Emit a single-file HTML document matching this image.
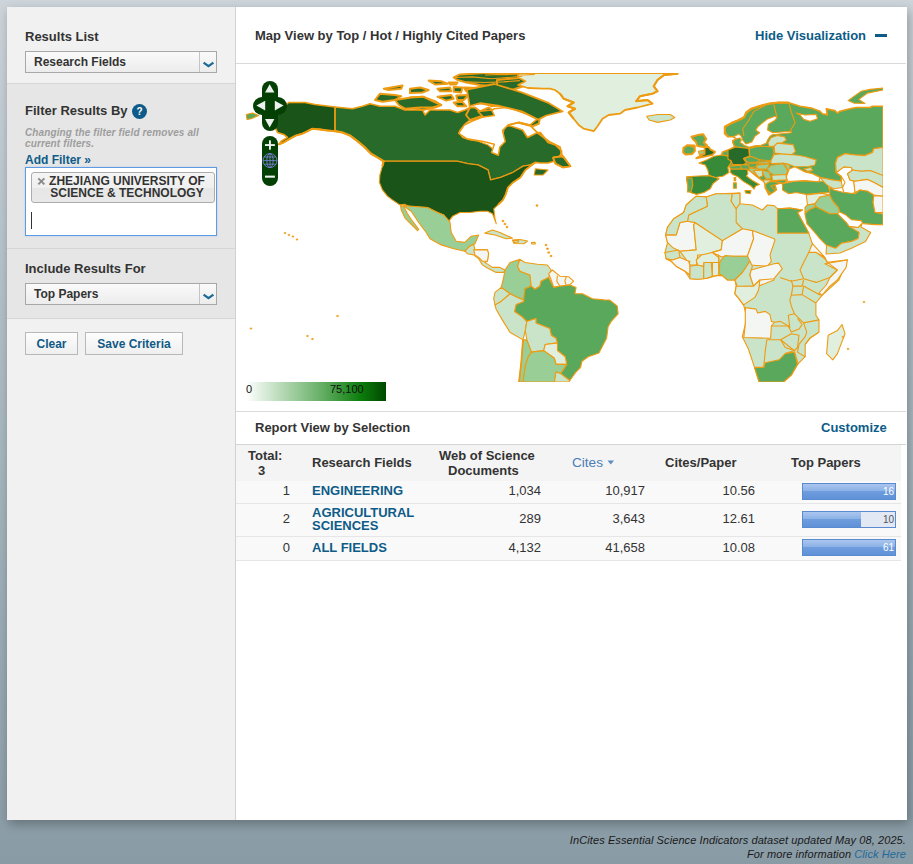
<!DOCTYPE html>
<html><head><meta charset="utf-8">
<style>
*{box-sizing:border-box;margin:0;padding:0}
html,body{width:913px;height:864px;overflow:hidden}
body{font-family:"Liberation Sans",sans-serif;background:linear-gradient(#cdd4da 0px,#b2c0c8 300px,#a0b0b8 550px,#899ba5 864px);position:relative;color:#333}
.a{position:absolute;white-space:nowrap}
.h{font-size:13px;font-weight:bold;color:#333;line-height:15px}
.sel{position:absolute;border:1px solid #a8a8a8;background:linear-gradient(#fafafa,#ececec)}
.sel span{position:absolute;left:8px;top:3px;font-size:12px;font-weight:bold;color:#333;line-height:14px}
.sel i{position:absolute;right:0;top:0;width:17px;height:20px;border-left:1px solid #c4c4c4}
.btn{position:absolute;border:1px solid #b8b8b8;background:linear-gradient(#fdfdfd,#efefef);font-size:12px;font-weight:bold;color:#0f5a85;text-align:center;line-height:22px}
.t13{font-size:13px;line-height:15px}
.b{font-weight:bold}
.lk{color:#0d5c88}
.num{font-size:13px;line-height:15px;color:#333;text-align:right}
.bar{position:absolute;left:802px;width:94px;height:17px;border:1px solid #5a8bd1;background:#e2e8f4}
.bar i{position:absolute;left:0;top:0;bottom:0;background:linear-gradient(#aac6ee 0%,#8db2e6 45%,#6e9ddd 50%,#5f92d8 100%)}
.bar span{position:absolute;right:1px;top:2px;font-size:10px;line-height:12px;color:#fff}
</style></head><body>
<div class="a" style="left:7px;top:7px;width:900px;height:813px;background:#fff;box-shadow:2px 4px 10px rgba(0,0,0,.28)"></div>
<!-- sidebar -->
<div class="a" style="left:7px;top:7px;width:228px;height:76px;background:#f1f1f1"></div>
<div class="a" style="left:7px;top:83px;width:228px;height:1px;background:#d6d6d6"></div>
<div class="a" style="left:7px;top:84px;width:228px;height:164px;background:#e6e6e6"></div>
<div class="a" style="left:7px;top:248px;width:228px;height:1px;background:#d6d6d6"></div>
<div class="a" style="left:7px;top:249px;width:228px;height:69px;background:#e6e6e6"></div>
<div class="a" style="left:7px;top:318px;width:228px;height:1px;background:#d6d6d6"></div>
<div class="a" style="left:7px;top:319px;width:228px;height:501px;background:#f1f1f1"></div>
<div class="a" style="left:235px;top:7px;width:1px;height:813px;background:#d2d2d2"></div>

<div class="a h" style="left:25px;top:29px">Results List</div>
<div class="sel" style="left:25px;top:51px;width:192px;height:22px"><span>Research Fields</span><i><svg width="17" height="20" style="position:absolute;left:0;top:0"><path d="M3.6 10.6 L8.5 14.2 L13.4 10.6" stroke="#1d6a93" stroke-width="2.2" fill="none"/></svg></i></div>

<div class="a h" style="left:25px;top:103px">Filter Results By</div>
<div class="a" style="left:132px;top:104px;width:15px;height:15px;border-radius:50%;background:#0f5a88;color:#fff;font-size:10px;font-weight:bold;text-align:center;line-height:15px">?</div>
<div class="a" style="left:25px;top:127px;font-size:10px;letter-spacing:0.12px;font-style:italic;font-weight:bold;color:#9d9d9d;line-height:11px">Changing the filter field removes all<br>current filters.</div>
<div class="a b lk" style="left:25px;top:153px;font-size:12px;line-height:14px">Add Filter &raquo;</div>
<div class="a" style="left:25px;top:167px;width:192px;height:69px;border:1px solid #5f9be4;background:#fff;box-shadow:0 0 2px rgba(95,155,228,.35)"></div>
<div class="a" style="left:31px;top:172px;width:184px;height:31px;border:1px solid #acacac;border-radius:3px;background:linear-gradient(#f5f5f5 0%,#efefef 50%,#e6e6e6 51%,#e9e9e9 100%)"></div>
<svg class="a" style="left:37px;top:177px" width="9" height="9"><path d="M1.3 1.3L7.4 7.4M7.4 1.3L1.3 7.4" stroke="#8a8a8a" stroke-width="1.9"/></svg>
<div class="a b" style="left:47px;top:175px;width:160px;font-size:12px;line-height:12px;text-align:center;color:#333">ZHEJIANG UNIVERSITY OF<br>SCIENCE &amp; TECHNOLOGY</div>
<div class="a" style="left:31px;top:212px;width:1px;height:17px;background:#333"></div>

<div class="a h" style="left:25px;top:261px">Include Results For</div>
<div class="sel" style="left:25px;top:283px;width:192px;height:22px"><span>Top Papers</span><i><svg width="17" height="20" style="position:absolute;left:0;top:0"><path d="M3.6 10.6 L8.5 14.2 L13.4 10.6" stroke="#1d6a93" stroke-width="2.2" fill="none"/></svg></i></div>

<div class="btn" style="left:25px;top:332px;width:53px;height:23px">Clear</div>
<div class="btn" style="left:85px;top:332px;width:98px;height:23px">Save Criteria</div>

<!-- main header -->
<div class="a h" style="left:255px;top:28px">Map View by Top / Hot / Highly Cited Papers</div>
<div class="a h lk" style="left:755px;top:28px">Hide Visualization</div>
<div class="a" style="left:875px;top:33.6px;width:12px;height:3.8px;background:#0d5c88"></div>
<div class="a" style="left:236px;top:63px;width:670px;height:1px;background:#d9d9d9"></div>

<svg class="a" style="left:0;top:0" width="913" height="864">
<defs><clipPath id="mc"><rect x="245" y="73" width="638" height="309"/></clipPath>
<linearGradient id="lg" x1="0" x2="1" y1="0" y2="0"><stop offset="0" stop-color="#ffffff"/><stop offset="0.55" stop-color="#62ad62"/><stop offset="0.82" stop-color="#0b7d0b"/><stop offset="1" stop-color="#004800"/></linearGradient></defs>
<g clip-path="url(#mc)" stroke="#ee9b12" stroke-width="1.1" stroke-linejoin="round">
<polygon fill="#276a29" stroke-width="1.6" points="334.9,107.0 352.4,108.7 362.4,106.2 370.0,103.8 380.0,106.3 395.0,106.3 405.0,110.0 422.5,110.0 425.0,115.0 430.0,110.0 450.0,110.0 457.5,112.5 465.0,110.0 470.0,107.5 476.3,112.5 484.0,112.5 495.0,115.0 502.5,125.0 511.3,126.3 522.5,130.0 527.5,137.5 537.5,132.5 540.4,132.5 548.0,142.5 555.4,145.0 561.7,151.2 560.4,155.0 554.2,161.2 548.0,163.0 540.0,163.0 535.4,162.4 530.4,165.0 523.0,166.2 513.0,172.4 500.5,177.4 490.5,180.0 488.0,170.0 478.0,165.0 468.0,163.7 457.3,161.2 383.6,161.2 377.4,157.4 371.1,153.7 364.9,147.4 357.4,141.2 349.9,135.4 342.4,132.4 334.9,131.2"/>
<polygon fill="#ffffff" points="458.8,132.5 460.0,130.0 465.0,123.8 470.0,120.0 478.8,120.0 484.0,117.5 490.0,120.0 495.0,122.5 502.5,127.5 504.0,130.0 502.0,137.0 500.0,145.0 498.0,155.0 494.0,150.0 488.0,145.0 478.0,141.3 470.0,140.0 462.5,137.5"/>
<polygon fill="#276a29" points="552.9,157.4 562.9,156.2 570.4,166.2 562.9,167.4 555.4,163.7"/>
<polygon fill="#276a29" points="535.4,168.7 548.0,170.0 543.0,175.0 534.2,175.0"/>
<polygon fill="#276a29" stroke-width="2" points="453.7,77.5 459.9,74.4 484.9,73.1 524.0,73.1 544.8,73.1 534.8,75.0 524.0,78.7 512.4,80.0 507.4,85.0 491.1,86.2 479.9,85.0 466.2,82.5 457.4,80.0"/>
<polygon fill="#276a29" stroke-width="2" points="428.7,80.6 441.2,81.2 447.5,83.7 435.0,84.4"/>
<polygon fill="#276a29" stroke-width="2" points="448.7,82.5 457.4,82.5 456.2,84.4 450.0,84.4"/>
<polygon fill="#276a29" stroke-width="2" points="410.0,88.7 420.0,87.5 428.7,90.0 422.5,92.5 410.0,93.1"/>
<polygon fill="#276a29" stroke-width="2" points="437.5,88.7 450.0,87.5 451.2,91.2 440.0,91.2"/>
<polygon fill="#276a29" stroke-width="2" points="453.7,86.9 462.4,87.5 461.2,92.5 453.7,91.8"/>
<polygon fill="#276a29" stroke-width="2" points="463.7,87.5 479.9,88.1 497.4,90.0 498.6,92.5 484.9,93.1 466.2,91.2"/>
<polygon fill="#276a29" stroke-width="2" points="410.0,97.5 422.5,96.8 435.0,101.2 441.2,105.0 435.0,107.5 422.5,110.0 410.0,107.5"/>
<polygon fill="#276a29" stroke-width="2" points="437.5,96.8 451.2,95.0 453.7,98.7 446.2,100.6"/>
<polygon fill="#276a29" stroke-width="2" points="456.2,95.6 468.7,95.0 463.7,100.0 457.4,100.0"/>
<polygon fill="#276a29" stroke-width="2" points="453.7,102.5 462.4,101.8 466.2,106.2 457.4,106.2"/>
<polygon fill="#276a29" stroke-width="2" points="471.2,98.7 479.9,95.6 491.1,96.2 497.4,98.7 516.1,103.7 524.0,106.2 524.0,119.9 517.4,119.9 513.6,111.2 502.4,105.0 491.1,106.2 487.4,102.5 477.4,103.7 472.4,102.5"/>
<polygon fill="#276a29" stroke-width="2" points="375.0,100.0 380.0,93.7 395.0,95.0 401.3,96.2 395.0,100.0 382.5,101.8"/>
<polygon fill="#276a29" stroke-width="2" points="395.0,100.0 411.2,97.5 423.7,96.8 432.5,101.2 441.2,105.0 432.5,107.5 420.0,107.5 405.0,108.7 398.8,105.0"/>
<polygon fill="#276a29" stroke-width="2" points="383.8,88.7 402.5,85.6 401.3,88.7 388.8,90.0"/>
<polygon fill="#276a29" stroke-width="2" points="471.3,100.0 477.5,95.6 492.5,95.6 502.5,98.8 513.8,101.3 526.3,105.0 536.3,110.0 547.5,114.4 540.0,117.5 538.8,123.8 532.5,126.3 522.5,123.8 513.8,121.3 505.0,118.8 513.8,113.8 507.5,108.8 501.3,105.0 495.0,103.8 488.8,105.0 477.5,102.5"/>
<polygon fill="#276a29" stroke-width="2" points="470.0,107.5 475.0,107.5 480.0,111.3 488.8,107.5 493.8,111.3 485.0,115.0 477.5,117.5 470.0,120.0 466.0,115.0"/>
<polygon fill="#276a29" stroke-width="2" points="481.3,117.5 490.0,120.0 495.0,122.5 482.5,122.5"/>
<polygon fill="#276a29" stroke-width="2" points="497.0,80.0 520.0,78.0 545.0,73.1 530.0,84.0 512.0,90.0 497.0,92.0"/>
<polygon fill="#1b5419" stroke-width="1.6" points="280.0,110.0 288.7,102.5 304.9,102.5 314.9,104.5 334.9,107.0 334.9,131.2 327.4,130.4 319.9,129.4 312.4,128.7 306.2,131.9 302.4,133.7 296.2,135.4 290.0,138.7 283.7,142.4 278.7,144.4 281.2,141.2 287.5,137.4 283.7,134.4 277.5,132.4 275.0,127.4 275.0,118.7"/>
<polygon fill="#5aa85b" points="246.2,114.5 252.5,113.0 258.7,115.5 251.2,118.7 247.0,119.5"/>
<polygon fill="#1b5419" points="383.6,161.2 457.3,161.2 468.0,163.7 478.0,165.0 488.0,170.0 490.5,180.0 500.5,177.4 513.0,172.4 523.0,166.2 530.4,165.0 535.4,162.4 525.4,170.0 520.4,177.4 513.0,182.4 508.0,187.4 505.5,194.9 503.0,199.9 498.0,204.9 493.8,208.8 495.0,218.8 496.3,223.8 492.5,213.8 487.5,211.3 480.0,211.3 470.0,212.5 460.0,212.5 452.5,216.3 448.8,221.3 443.8,215.0 437.5,212.5 427.5,207.5 410.0,206.9 405.0,204.4 399.8,204.9 392.4,199.9 387.4,196.1 382.4,189.9 379.4,182.4 379.9,174.9 382.4,166.2"/>
<polygon fill="#99cf96" points="403.7,205.6 427.5,207.5 437.5,212.5 443.7,215.0 449.9,221.8 451.2,232.5 456.2,241.2 464.9,242.4 471.2,236.2 478.7,235.0 474.9,243.7 469.9,246.2 464.9,251.2 453.7,248.7 441.2,244.9 430.0,238.7 426.2,232.5 418.7,222.5 411.2,211.2 407.5,208.7"/>
<polygon fill="#99cf96" points="400.6,205.6 403.7,206.2 407.5,213.7 412.5,221.2 418.7,229.3 417.5,230.6 411.9,225.0 405.0,218.1 401.2,210.0"/>
<polygon fill="#cae4c9" points="464.9,251.2 469.9,246.2 473.7,244.3 474.9,249.9 487.4,249.9 488.6,253.7 487.4,261.2 484.9,262.4 492.4,267.4 499.9,267.4 504.9,269.9 503.6,272.4 496.1,272.4 487.4,268.0 482.4,264.9 478.7,258.7 473.7,254.9 467.4,253.7"/>
<polygon fill="#f3f6f3" points="473.7,249.9 487.4,249.9 488.6,253.7 487.4,261.2 482.4,261.2 478.7,257.4 474.9,254.9"/>
<polygon fill="#cae4c9" points="484.9,233.1 492.4,230.0 499.9,232.5 512.4,238.1 506.1,238.7 494.9,235.0"/>
<polygon fill="#cae4c9" points="512.5,240.0 520.0,239.5 527.5,241.0 524.0,243.8 514.0,243.5"/>
<polygon fill="#e0efde" stroke-width="1.8" points="518.0,73.0 677.8,73.0 677.8,73.7 664.0,75.0 657.5,80.0 653.7,86.2 657.5,91.2 652.5,93.7 640.0,96.2 636.2,101.2 647.5,100.0 652.5,103.7 637.5,107.5 625.0,110.0 620.0,113.7 608.7,115.0 602.5,118.7 597.5,126.2 593.7,131.2 583.7,128.7 578.7,125.0 573.7,118.7 568.7,112.5 575.0,108.7 567.5,106.2 573.7,102.5 563.7,98.7 560.0,93.7 555.0,90.0 550.0,88.7 542.9,88.7 527.9,88.0 518.0,85.0 525.4,81.2 518.0,77.5"/>
<polygon fill="#cae4c9" points="646.6,116.2 657.8,114.5 670.3,114.5 674.8,117.5 670.3,120.0 657.8,122.4 649.1,120.0"/>
<polygon fill="#99cf96" points="505.0,270.0 510.0,262.5 520.0,259.4 517.5,266.2 520.0,271.2 530.0,275.0 531.2,286.2 525.0,288.7 523.7,299.9 517.5,297.4 510.0,293.7 501.2,287.4 503.7,277.5"/>
<polygon fill="#cae4c9" points="520.0,259.4 525.0,262.5 537.4,264.3 547.4,265.0 551.2,270.0 548.7,277.5 541.2,281.2 539.9,286.2 534.9,289.3 531.2,286.2 530.0,275.0 520.0,271.2 517.5,266.2"/>
<polygon fill="#f3f6f3" points="548.7,273.7 552.4,270.0 559.9,276.2 568.7,276.8 573.6,281.2 569.9,284.9 559.9,286.2 553.7,287.4 551.2,280.0"/>
<polygon fill="#5aa85b" points="525.0,288.7 531.2,286.2 534.9,289.3 539.9,286.2 541.2,281.2 548.7,277.5 553.7,287.4 559.9,286.2 569.9,284.9 576.1,287.4 574.9,293.7 582.4,293.7 592.4,298.7 604.0,299.9 609.6,300.0 617.3,306.1 618.1,313.8 611.2,321.5 608.1,326.8 606.6,338.3 598.9,352.9 588.2,356.7 582.0,361.3 580.5,367.5 575.9,372.1 569.8,380.5 560.6,373.6 566.7,364.4 565.2,356.7 557.5,350.6 556.0,338.3 551.3,335.3 549.8,328.4 536.0,323.0 536.0,318.4 526.8,321.5 522.2,316.9 514.5,311.5 516.1,304.6 523.7,301.5 523.7,299.9"/>
<polygon fill="#cae4c9" points="495.0,304.9 501.2,301.2 510.0,293.7 517.5,297.4 523.7,299.9 523.7,301.5 516.1,304.6 514.5,311.5 522.2,316.9 526.8,321.5 525.3,330.7 523.0,339.9 509.9,332.2 502.3,319.9 496.1,309.2"/>
<polygon fill="#cae4c9" points="495.0,292.4 501.2,287.4 510.0,293.7 501.2,301.2 495.0,304.9 493.7,298.7"/>
<polygon fill="#cae4c9" points="526.8,321.5 536.0,318.4 536.0,323.0 549.8,328.4 551.3,335.3 556.0,338.3 557.5,342.9 545.2,344.5 543.7,350.6 531.4,352.1 526.8,339.9 525.3,330.7"/>
<polygon fill="#e0efde" points="545.2,344.5 557.5,342.9 557.5,350.6 565.2,356.7 566.7,364.4 556.0,364.4 554.4,358.3 543.7,350.6"/>
<polygon fill="#99cf96" points="523.0,339.9 526.8,339.9 531.4,352.1 528.3,356.7 525.3,366.0 523.0,382.0 519.1,382.0 521.4,361.3"/>
<polygon fill="#99cf96" points="531.4,352.1 543.7,350.6 554.4,358.3 556.0,364.4 566.7,364.4 560.6,373.6 556.0,372.1 554.4,382.0 523.0,382.0 525.3,366.0 528.3,356.7"/>
<polygon fill="#cae4c9" points="556.0,372.1 560.6,373.6 569.8,380.5 569.0,382.0 554.4,382.0"/>
<polygon fill="#5aa85b" stroke-width="1.6" points="728.2,136.7 724.9,133.4 724.9,126.8 731.4,123.1 737.7,120.6 743.9,117.5 746.4,112.5 751.4,108.7 758.9,106.2 768.9,103.7 778.9,102.5 788.9,102.7 793.7,104.3 800.0,106.2 811.2,108.1 820.0,111.2 822.4,113.7 827.4,114.9 826.2,108.7 834.9,110.6 837.4,113.1 839.9,111.2 849.9,108.7 856.2,107.5 869.9,107.5 872.4,106.2 883.0,106.2 883.0,147.5 873.7,148.7 872.4,152.5 864.9,155.6 854.9,155.0 844.9,153.7 837.4,157.5 835.6,163.1 836.2,172.5 841.2,176.2 841.3,181.3 832.5,180.0 820.0,177.5 812.5,173.8 805.0,171.9 798.8,168.8 790.0,170.0 785.0,177.5 786.3,181.9 782.5,183.8 773.9,181.2 776.4,189.9 768.9,194.9 765.1,187.4 765.1,182.4 761.4,179.9 756.4,176.2 751.4,171.8 746.4,168.7 745.2,166.8 737.7,165.6 731.4,166.2 728.9,166.8 727.7,165.0 731.4,161.8 727.7,156.2 721.5,155.0 722.7,151.9 730.1,149.2 734.7,146.6 732.8,142.6 732.8,140.7 736.7,138.7 733.4,136.7"/>
<polygon fill="#ffffff" points="733.4,136.7 738.7,134.1 741.3,136.1 742.6,140.0 745.9,143.9 751.8,142.0 755.1,136.1 759.7,132.8 755.8,130.1 757.8,126.8 762.4,122.9 767.6,118.9 775.0,116.3 777.0,117.5 775.0,120.3 768.3,124.2 767.6,130.1 772.9,132.8 791.2,131.3 791.2,132.8 772.2,134.7 769.6,136.7 767.6,140.0 766.3,143.3 761.1,145.3 754.5,145.9 749.2,147.2 743.9,145.3 742.6,143.9 740.0,142.6 741.3,140.0 740.0,138.0 736.7,138.7"/>
<polygon fill="#ffffff" points="796.3,113.1 805.0,115.0 816.3,114.4 817.5,118.8 810.0,121.3 803.8,119.4 800.0,115.0"/>
<polygon fill="#5aa85b" points="848.1,100.6 855.0,95.6 861.3,91.3 870.0,89.4 883.1,88.1 883.1,90.0 867.5,93.1 858.8,99.4 865.0,103.5 853.8,103.1"/>
<polygon fill="#5aa85b" points="782.5,183.8 795.0,181.3 805.0,180.6 821.3,181.3 827.5,182.5 828.8,187.5 830.0,192.5 821.3,193.1 806.3,194.4 796.3,192.5 788.8,193.8 782.5,190.0"/>
<polygon fill="#cae4c9" points="820.0,177.5 832.5,180.0 841.3,181.3 842.5,187.5 833.8,188.8 828.8,186.3 825.0,183.1"/>
<polygon fill="#ffffff" points="836.3,172.5 843.8,166.9 851.3,167.5 852.5,170.6 847.5,173.8 850.0,180.0 853.8,181.3 855.0,192.5 851.3,193.8 843.8,192.5 842.5,187.5 845.0,182.5 841.3,176.3"/>
<polygon fill="#cae4c9" points="835.6,163.1 837.5,157.5 845.0,153.8 855.0,155.0 865.0,155.6 872.5,152.5 873.8,148.8 883.1,147.5 883.1,175.6 870.0,170.6 861.3,171.3 852.5,170.0 851.3,167.5 843.8,166.9 836.3,172.5"/>
<polygon fill="#cae4c9" points="852.5,170.0 861.3,171.3 870.0,170.6 883.1,175.6 883.1,187.5 875.0,183.1 867.5,179.4 855.0,181.3 850.0,180.0 847.5,173.8"/>
<polygon fill="#f3f6f3" points="853.8,181.3 855.0,181.3 867.5,179.4 875.0,183.1 883.1,187.5 883.1,196.3 873.8,195.0 867.5,191.3 860.0,190.0 855.0,192.5"/>
<polygon fill="#5aa85b" points="830.0,187.5 833.8,190.0 843.8,192.5 855.0,193.8 860.0,190.0 867.5,191.3 873.8,195.0 873.1,202.5 875.0,212.5 883.0,214.0 883.0,224.6 875.0,224.6 863.1,223.6 861.1,220.6 851.3,219.7 845.4,214.7 839.4,211.8 838.5,207.8 832.5,200.9 829.6,195.0"/>
<polygon fill="#f3f6f3" points="873.8,195.6 883.1,196.3 883.1,212.5 875.0,212.5 873.1,202.5"/>
<polygon fill="#99cf96" points="814.8,203.9 819.7,197.0 829.6,195.0 832.5,200.9 838.5,207.8 839.4,211.8 837.5,213.7 829.6,213.7 815.8,206.8"/>
<polygon fill="#e0efde" points="806.3,195.0 821.3,193.1 829.6,195.0 819.7,197.0 814.8,203.9 807.5,205.0"/>
<polygon fill="#99cf96" points="805.0,207.5 807.5,205.0 814.8,203.9 815.8,206.8 809.0,210.0 805.0,213.0"/>
<polygon fill="#5aa85b" points="804.9,213.7 809.0,210.0 815.8,206.8 829.6,213.7 837.5,213.7 842.4,218.7 846.4,222.6 849.3,226.6 858.2,227.5 859.2,232.5 858.2,238.4 851.3,241.4 841.4,243.3 835.5,248.3 826.6,245.3 819.7,238.4 814.8,232.5 806.9,223.6"/>
<polygon fill="#cae4c9" points="849.3,226.6 858.2,227.5 862.0,223.5 861.0,227.0 870.7,232.5 865.5,241.4 852.0,248.0 840.0,253.0 826.0,254.0 826.6,245.3 835.5,248.3 841.4,243.3 851.3,241.4 858.2,238.4 859.2,232.5"/>
<polygon fill="#368a38" points="699.0,163.1 706.5,160.0 714.0,156.3 721.5,155.0 727.8,156.3 731.5,161.9 727.8,167.5 729.0,172.5 722.8,176.3 715.3,177.5 709.0,175.6 707.8,170.0 705.3,165.0"/>
<polygon fill="#368a38" points="686.5,176.9 694.0,176.3 709.0,175.6 715.3,177.5 719.0,178.8 712.8,183.8 710.3,188.8 704.0,192.5 696.5,194.4 690.3,192.5 687.8,186.3"/>
<polygon fill="#5aa85b" points="686.5,178.0 692.0,178.0 692.8,185.0 691.0,192.0 687.5,192.0 687.8,186.3"/>
<polygon fill="#cae4c9" points="696.2,196.2 686.2,205.0 683.7,212.5 673.7,218.7 667.5,227.4 665.6,234.9 667.5,242.4 665.0,252.4 666.2,258.7 671.2,261.2 676.2,266.2 685.0,271.2 690.0,278.7 697.5,279.3 707.4,278.1 716.2,275.6 722.4,275.6 727.4,280.0 734.9,280.0 736.2,286.2 734.9,293.7 739.9,299.9 743.6,304.9 746.1,314.9 745.3,324.5 742.3,336.7 748.4,349.0 754.5,367.4 759.1,381.8 783.7,381.8 791.3,375.1 797.5,364.4 805.2,356.7 805.2,344.4 809.8,338.3 819.0,332.1 819.0,319.9 815.9,315.3 815.9,303.0 822.0,295.3 838.9,280.0 847.4,259.9 827.4,262.4 824.9,258.7 816.2,252.4 812.4,243.7 808.7,233.1 797.5,212.5 802.4,210.0 790.0,208.1 777.5,208.7 774.0,205.6 767.4,205.0 762.4,210.0 752.4,205.0 739.9,203.7 739.9,193.1 716.2,193.7 706.2,196.9"/>
<polygon fill="#5aa85b" points="777.5,208.8 790.0,208.1 802.5,210.0 797.5,212.5 808.8,233.1 777.5,233.1"/>
<polygon fill="#f3f6f3" points="665.6,234.9 676.2,234.9 680.0,222.5 687.5,221.2 695.0,222.5 693.7,225.0 696.2,249.9 680.0,251.2 672.5,247.4 667.5,242.4"/>
<polygon fill="#e0efde" points="695.0,222.5 722.4,240.6 721.2,249.9 712.4,252.4 698.7,257.4 696.2,265.0 690.0,265.0 680.0,251.2 696.2,249.9 693.7,225.0"/>
<polygon fill="#f3f6f3" points="722.4,240.6 742.4,228.7 752.4,230.6 753.6,238.7 747.4,256.2 734.9,256.2 721.2,256.8 712.4,252.4 721.2,249.9"/>
<polygon fill="#f3f6f3" points="752.4,230.6 774.0,238.7 775.0,240.0 770.0,255.0 771.3,261.3 767.5,266.2 749.9,265.0 747.4,256.2 753.6,238.7"/>
<polygon fill="#cae4c9" points="706.2,196.9 716.2,193.7 732.4,193.7 731.2,201.2 736.2,208.7 736.2,222.5 742.4,228.7 722.4,240.6 695.0,222.5 687.5,221.2 688.7,215.0 707.4,206.2"/>
<polygon fill="#cae4c9" points="732.4,193.7 739.9,193.1 739.9,203.7 736.2,208.7 731.2,201.2"/>
<polygon fill="#cae4c9" points="696.2,196.2 706.2,196.9 707.4,206.2 688.7,215.0 687.5,221.2 680.0,222.5 676.2,234.9 665.6,234.9 667.5,227.4 673.7,218.7 683.7,212.5 686.2,205.0"/>
<polygon fill="#f3f6f3" points="808.7,252.4 812.4,243.7 824.9,257.4 816.2,252.4"/>
<polygon fill="#f3f6f3" points="824.9,263.7 847.4,260.0 846.1,267.4 837.4,279.9 829.0,287.0 822.0,295.3 819.0,293.0 826.2,285.0 829.9,277.4 837.4,269.9"/>
<polygon fill="#99cf96" points="720.0,261.3 725.0,255.6 735.0,256.3 747.5,256.3 750.0,261.3 742.5,272.5 735.0,280.0 727.5,280.0 722.5,275.6 718.8,273.8"/>
<polygon fill="#f3f6f3" points="745.3,307.6 756.1,309.1 757.6,313.0 765.3,311.4 769.9,314.5 771.4,321.4 774.5,322.2 771.4,326.0 770.6,338.3 743.8,337.5 745.3,324.5"/>
<polygon fill="#5aa85b" points="754.5,367.4 763.7,367.4 765.3,362.8 779.1,359.8 785.2,353.6 794.4,352.1 797.5,364.4 791.3,375.1 783.7,382.0 759.1,382.0"/>
<polygon fill="#e0efde" points="828.2,335.2 837.4,330.6 842.0,324.5 845.0,333.7 837.4,353.6 832.8,359.8 826.6,353.6"/>
<polygon fill="#f3f6f3" points="671.2,261.2 690.0,261.2 688.7,266.2 690.0,275.0 685.0,271.2 676.2,266.2"/>
<polygon fill="#e0efde" points="737.4,286.8 746.1,286.2 749.9,291.2 747.4,299.9 743.6,304.9 739.9,299.9 734.9,293.7"/>
<polygon fill="#f3f6f3" points="749.9,275.0 774.0,268.0 774.0,280.0 755.0,287.5 749.9,285.0"/>
<polygon fill="#e0efde" points="697.5,255.0 718.7,255.0 718.7,265.0 697.5,265.0"/>
<polygon fill="#cae4c9" points="665.0,252.5 678.7,250.0 680.0,257.5 672.5,260.0 666.2,258.7"/>
<polygon fill="#f3f6f3" points="666.2,258.7 672.5,260.0 680.0,257.5 688.7,261.2 690.0,266.2 690.0,275.0 685.0,271.2 676.2,266.2 671.2,261.2"/>
<polygon fill="#cae4c9" points="690.0,266.2 697.5,265.0 703.7,266.2 703.7,278.7 697.5,279.3 690.0,278.7 690.0,275.0"/>
<polygon fill="#cae4c9" points="703.7,262.5 711.2,262.5 712.4,276.2 707.4,278.1 703.7,278.7 703.7,266.2"/>
<polygon fill="#e0efde" points="712.4,262.5 718.7,262.5 718.7,275.0 716.2,275.6 712.4,276.2"/>
<polygon fill="#e0efde" points="697.5,265.0 696.2,260.0 701.2,255.0 712.4,252.5 718.7,257.5 718.7,262.5 703.7,262.5 703.7,266.2"/>
<polygon fill="#cae4c9" points="734.9,280.0 742.4,272.5 749.9,261.2 752.4,266.2 749.9,275.0 753.6,286.2 746.1,286.2 737.4,286.8"/>
<polygon fill="#f3f6f3" points="749.9,275.0 751.1,270.0 764.9,266.2 774.0,263.7 778.6,263.1 782.3,268.7 774.0,278.7 759.9,280.0 753.6,286.2"/>
<polygon fill="#e0efde" points="736.2,286.2 746.1,286.2 753.6,286.2 759.9,280.0 758.6,290.0 754.9,297.4 747.4,302.4 743.6,304.9 739.9,299.9 734.9,293.7"/>
<polygon fill="#276a29" points="728.0,150.0 735.7,146.9 748.7,148.4 749.5,156.1 743.3,158.4 746.4,163.0 743.3,164.5 732.6,164.5 731.1,160.7 728.0,159.2"/>
<polygon fill="#5aa85b" points="749.5,148.4 758.7,146.1 772.5,146.9 774.0,152.3 772.5,157.6 770.9,160.7 760.2,159.9 749.5,156.1"/>
<polygon fill="#5aa85b" points="744.1,158.4 751.0,156.5 760.2,159.9 757.1,162.2 747.2,162.2"/>
<polygon fill="#99cf96" points="757.1,162.2 770.2,161.5 767.9,163.8 758.7,163.8"/>
<polygon fill="#5aa85b" points="744.9,164.5 756.4,163.0 757.1,166.8 747.2,167.6"/>
<polygon fill="#99cf96" points="756.4,165.3 769.4,163.8 767.1,169.1 757.1,169.1"/>
<polygon fill="#99cf96" points="767.1,169.1 770.9,165.3 783.2,163.8 787.8,170.7 786.3,174.5 774.0,175.3 769.4,172.2"/>
<polygon fill="#cae4c9" points="770.9,160.7 774.0,154.6 781.7,153.8 798.0,155.3 804.7,156.5 816.2,159.9 814.7,165.3 808.5,166.5 798.0,166.8 794.7,166.8 789.3,164.5 783.2,163.0 770.9,163.8"/>
<polygon fill="#cae4c9" points="774.0,146.1 777.1,143.1 793.2,144.6 795.5,151.5 791.7,154.6 781.7,153.8 774.8,153.0"/>
<polygon fill="#cae4c9" points="767.9,143.1 770.9,137.7 777.1,135.4 784.7,136.9 786.3,140.0 781.7,143.1 777.1,143.1 774.0,146.1 769.4,146.9"/>
<polygon fill="#99cf96" points="784.0,163.8 789.3,164.5 790.1,169.1 787.8,169.9"/>
<polygon fill="#99cf96" points="762.5,169.9 769.4,172.2 770.9,178.3 766.3,179.1 763.3,174.5"/>
<polygon fill="#cae4c9" points="753.3,170.7 762.5,169.9 762.5,176.0 758.7,177.6"/>
<polygon fill="#99cf96" points="747.9,167.6 757.1,169.1 762.5,169.9 753.3,170.7 758.7,177.6 751.8,172.2 747.2,169.1"/>
<polygon fill="#cae4c9" points="771.7,175.3 786.3,174.5 786.3,179.9 772.5,180.6"/>
<polygon fill="#5aa85b" points="764.8,182.9 772.5,181.4 781.7,182.9 770.9,186.0 775.5,190.6 770.9,193.7 766.3,189.1"/>
<polygon fill="#cae4c9" points="763.3,179.9 772.5,179.9 764.8,184.5"/>
<polygon fill="#5aa85b" points="739.5,164.5 748.7,165.3 749.5,169.9 739.5,170.3"/>
<polygon fill="#5aa85b" points="729.5,166.1 740.3,165.3 741.8,169.1 734.1,169.9 730.3,169.1"/>
<polygon fill="#368a38" points="730.3,169.1 741.8,169.1 747.2,169.1 747.9,173.7 746.4,176.0 752.5,180.6 759.4,184.5 755.6,186.0 754.1,189.1 751.0,186.0 743.3,181.4 738.0,176.8 732.6,174.5 730.3,172.2"/>
<polygon fill="#368a38" points="744.9,190.6 751.0,190.6 750.2,193.7 745.6,192.9"/>
<polygon fill="#5aa85b" points="733.4,182.9 736.4,182.9 736.4,188.3 733.4,188.3"/>
<polygon fill="#5aa85b" points="734.1,177.6 735.7,177.6 735.7,180.6 734.1,180.6"/>
<polygon fill="#ffffff" points="786.3,176.8 789.3,169.1 794.7,166.8 798.8,168.8 805.0,171.9 812.5,173.8 820.0,177.5 818.8,181.9 805.0,180.6 792.5,181.3 787.8,181.4"/>
<polygon fill="#cae4c9" points="803.8,168.8 811.2,167.5 812.5,170.6 807.5,171.2"/>
<polygon fill="#5aa85b" stroke-width="2" points="683.5,147.8 687.5,145.2 694.5,145.6 694.9,150.9 692.3,153.9 685.3,154.4 683.1,152.2"/>
<polygon fill="#5aa85b" stroke-width="2" points="691.4,136.8 697.5,135.1 703.2,134.2 706.3,139.0 703.7,142.5 707.2,145.6 703.7,146.9 697.5,146.1 695.8,141.7 693.2,139.5"/>
<polygon fill="#276a29" stroke-width="1.8" points="704.6,147.4 708.5,146.9 710.7,149.6 715.1,151.8 712.5,154.8 704.6,156.6 696.2,158.3 701.1,155.3 704.6,153.9 704.6,149.6"/>
<polygon fill="#99cf96" points="698.4,151.3 703.7,150.4 704.1,153.9 699.3,154.4"/>
<polygon fill="#99cf96" points="691.4,146.1 694.9,145.6 694.9,146.9 691.4,146.9"/>
<polygon fill="#ffffff" stroke-width="1.5" points="458.7,133.3 464.2,125.1 472.4,121.0 483.3,116.9 494.3,108.7 508.0,107.3 518.9,111.4 538.1,118.3 529.9,125.1 518.9,122.4 508.0,125.1 502.5,130.6 505.2,141.5 499.8,147.0 498.4,155.2 491.6,152.5 494.3,144.3 483.3,141.5 466.9,138.8"/>
<polygon fill="#276a29" stroke-width="1.8" points="466.9,89.5 494.3,84.0 521.7,92.3 549.1,103.2 562.7,111.4 546.3,115.5 538.1,119.6 521.7,111.4 499.8,106.0 480.6,103.2 469.6,106.0"/>
<polygon fill="#276a29" stroke-width="1.5" points="477.9,111.4 491.6,110.1 494.3,115.5 483.3,116.9"/>
<polygon fill="#ee9b12" stroke-width="0.6" points="284.2,232.4 285.8,232.4 285.8,233.6 284.2,233.6"/>
<polygon fill="#ee9b12" stroke-width="0.6" points="288.2,234.4 289.8,234.4 289.8,235.6 288.2,235.6"/>
<polygon fill="#ee9b12" stroke-width="0.6" points="292.2,235.9 293.8,235.9 293.8,237.1 292.2,237.1"/>
<polygon fill="#ee9b12" stroke-width="0.6" points="296.2,238.9 297.8,238.9 297.8,240.1 296.2,240.1"/>
<polygon fill="#ee9b12" stroke-width="0.6" points="250.2,327.9 251.8,327.9 251.8,329.1 250.2,329.1"/>
<polygon fill="#ee9b12" stroke-width="0.6" points="336.7,315.4 338.3,315.4 338.3,316.6 336.7,316.6"/>
<polygon fill="#ee9b12" stroke-width="0.6" points="306.7,335.4 308.3,335.4 308.3,336.6 306.7,336.6"/>
<polygon fill="#ee9b12" stroke-width="0.6" points="311.7,338.4 313.3,338.4 313.3,339.6 311.7,339.6"/>
<polygon fill="#ee9b12" stroke-width="0.6" points="842.2,336.4 843.8,336.4 843.8,337.6 842.2,337.6"/>
<polygon fill="#ee9b12" stroke-width="0.6" points="847.2,348.4 848.8,348.4 848.8,349.6 847.2,349.6"/>
<polygon fill="#ee9b12" stroke-width="0.6" points="863.2,301.4 864.8,301.4 864.8,302.6 863.2,302.6"/>
<polygon fill="#ee9b12" stroke-width="0.6" points="545.1,244.3 546.9,244.3 546.9,245.7 545.1,245.7"/>
<polygon fill="#ee9b12" stroke-width="0.6" points="546.6,248.0 548.4,248.0 548.4,249.4 546.6,249.4"/>
<polygon fill="#ee9b12" stroke-width="0.6" points="547.8,251.8 549.6,251.8 549.6,253.2 547.8,253.2"/>
<polygon fill="#ee9b12" stroke-width="0.6" points="550.1,255.3 551.9,255.3 551.9,256.7 550.1,256.7"/>
<polygon fill="#ee9b12" stroke-width="0.6" points="502.1,220.3 503.9,220.3 503.9,221.7 502.1,221.7"/>
<polygon fill="#ee9b12" stroke-width="0.6" points="504.1,223.3 505.9,223.3 505.9,224.7 504.1,224.7"/>
<polygon fill="#ee9b12" stroke-width="0.6" points="506.1,226.3 507.9,226.3 507.9,227.7 506.1,227.7"/>
<polygon fill="#ee9b12" stroke-width="0.6" points="536.1,204.8 537.9,204.8 537.9,206.2 536.1,206.2"/>
<polygon fill="#cae4c9" stroke-width="1.2" points="513.0,240.5 518.0,240.2 518.5,242.0 514.0,242.3"/>
<polygon fill="#e0efde" stroke-width="1.2" points="531.5,242.5 535.0,242.3 535.3,243.8 531.8,244.0"/>
<polyline fill="none" points="808.7,252.4 800.0,269.9 803.7,278.7 816.2,282.4 829.9,277.4 837.4,269.9 827.4,262.4 824.9,257.4"/>
<polyline fill="none" points="780.0,277.4 791.2,281.2 803.7,278.7"/>
<polyline fill="none" points="774.5,322.2 780.6,321.4 788.3,326.0 789.8,327.5 788.3,315.3 794.4,313.7 791.3,306.1 789.8,299.9 791.3,295.3 792.9,286.1 791.3,280.0"/>
<polyline fill="none" points="791.3,295.3 802.1,294.6 815.9,303.0"/>
<polyline fill="none" points="794.4,313.7 799.0,318.3 803.6,322.9 819.0,319.9"/>
<polyline fill="none" points="792.9,286.1 802.1,286.1 803.6,280.0"/>
<polyline fill="none" points="802.1,294.6 803.6,286.1 820.5,295.3"/>
<polyline fill="none" points="771.4,326.0 788.3,326.0 791.3,332.1 799.0,329.1 802.1,324.5 797.5,318.3"/>
<polyline fill="none" points="803.6,322.9 806.7,332.1 805.2,336.7 799.0,344.4 797.5,352.1 805.2,356.7"/>
<polyline fill="none" points="819.0,332.1 809.8,338.3 805.2,344.4"/>
<polyline fill="none" points="780.6,339.8 791.3,333.7 799.0,335.2 797.5,347.5 794.4,350.6 785.2,347.5 780.6,339.8"/>
<polyline fill="none" points="766.8,339.8 780.6,339.8 794.4,350.6 785.2,353.6"/>
<polyline fill="none" points="766.8,339.8 765.3,350.6 763.7,367.4"/>
<polyline fill="none" points="794.4,351.3 798.3,364.4"/>
<polyline fill="none" points="743.9,136.2 742.7,128.7 748.9,120.0 753.9,111.2 765.1,105.6"/>
<polyline fill="none" points="777.0,117.5 775.1,110.0 773.9,104.4"/>
<polyline fill="none" points="788.9,103.1 791.4,112.5 795.1,122.5 790.1,131.2"/>
<polyline fill="none" points="454.9,77.5 472.4,76.9 491.1,78.7 507.4,77.5 522.4,76.2"/>
<polyline fill="none" points="466.2,81.9 484.9,82.5 503.6,81.9 519.9,80.6"/>
<polyline fill="none" points="484.9,75.0 503.6,74.4 524.0,75.0 534.8,74.4"/>
<polyline fill="none" stroke-width="2.2" points="334.9,131.2 342.4,132.4 349.9,135.4 357.4,141.2 364.9,147.4 371.1,153.7 377.4,157.4 383.6,161.2 382.4,166.2"/>
<polyline fill="none" stroke-width="2" points="334.9,131.2 327.4,130.4 319.9,129.4 312.4,128.7 306.2,131.9 302.4,133.7 296.2,135.4 290.0,138.7 283.7,142.4 278.7,144.4"/>
<polyline fill="none" stroke-width="2" points="552.9,157.4 562.9,156.2 570.4,166.2 562.9,167.4 555.4,163.7 552.9,157.4"/>
<polyline fill="none" stroke-width="1.8" points="535.4,162.4 525.4,170.0 520.4,177.4 513.0,182.4 508.0,187.4 505.5,194.9 503.0,199.9 498.0,204.9"/>
<polyline fill="none" stroke-width="2.2" points="728.2,136.7 724.9,133.4 724.9,126.8 731.4,123.1 737.7,120.6 743.9,117.5 746.4,112.5 751.4,108.7 758.9,106.2 768.9,103.7 778.9,102.5 788.9,102.7"/>
<polyline fill="none" stroke-width="2" points="677.8,73.7 664.0,75.0 657.5,80.0 653.7,86.2 657.5,91.2 652.5,93.7 640.0,96.2 636.2,101.2 647.5,100.0 652.5,103.7"/>
<polyline fill="none" stroke-width="2.2" points="573.7,118.7 568.7,112.5 575.0,108.7 567.5,106.2 573.7,102.5 563.7,98.7 560.0,93.7"/>
<polyline fill="none" stroke-width="1.8" points="508.0,125.1 518.9,122.4 529.9,125.1 538.1,133.3 549.1,141.5 560.0,147.0 562.7,158.0"/>
<polyline fill="none" stroke-width="1.8" points="519.1,382.0 521.4,361.3 523.0,339.9"/>
<polyline fill="none" points="557.4,275.6 556.8,281.2 559.9,286.2"/>
<polyline fill="none" points="566.2,276.8 564.9,281.2 566.2,285.6"/>
</g>
<rect x="246" y="382" width="140" height="19" fill="url(#lg)"/>
<!-- nav control -->
<g fill="#043f04">
<rect x="262" y="81" width="16" height="50" rx="8"/>
<rect x="253" y="97" width="34" height="18" rx="9"/>
<rect x="262" y="136" width="16" height="50" rx="8"/>
</g>
<g fill="#eef2ee">
<path d="M269.7 84.3 L274.4 92.6 L265 92.6Z"/>
<path d="M269.7 127.5 L274.4 119 L265 119Z"/>
<path d="M256.4 105.6 L265.2 100.8 L265.2 110.4Z"/>
<path d="M283.6 105.6 L274.8 100.8 L274.8 110.4Z"/>
<rect x="269" y="140.3" width="1.9" height="9.4"/><rect x="265" y="144.1" width="9.9" height="1.9"/>
<rect x="265" y="175.6" width="9.9" height="2.1"/>
</g>
<g fill="none" stroke="#8a8af0" stroke-width="0.75">
<circle cx="270" cy="160.6" r="7"/>
<ellipse cx="270" cy="160.6" rx="3.2" ry="7"/>
<path d="M263 160.6H277M264 157H276M264 164.2H276M270 153.6V167.6"/>
</g>
</svg>
<div class="a" style="left:246px;top:383px;font-size:11px;line-height:12px;color:#111">0</div>
<div class="a" style="left:330px;top:383px;font-size:11px;line-height:12px;color:#111">75,100</div>

<div class="a" style="left:236px;top:411px;width:670px;height:1px;background:#d9d9d9"></div>
<div class="a h" style="left:255px;top:420px">Report View by Selection</div>
<div class="a h lk" style="left:821px;top:420px">Customize</div>

<!-- table -->
<div class="a" style="left:236px;top:444px;width:670px;height:1px;background:#d4d4d4"></div>
<div class="a" style="left:236px;top:445px;width:665px;height:36px;background:#f4f4f4"></div>
<div class="a" style="left:236px;top:481px;width:665px;height:22px;background:#f9f9f9"></div>
<div class="a" style="left:236px;top:503px;width:665px;height:1px;background:#e6e6e6"></div>
<div class="a" style="left:236px;top:504px;width:665px;height:32px;background:#f9f9f9"></div>
<div class="a" style="left:236px;top:536px;width:665px;height:1px;background:#e6e6e6"></div>
<div class="a" style="left:236px;top:537px;width:665px;height:23px;background:#f9f9f9"></div>
<div class="a" style="left:236px;top:560px;width:665px;height:1px;background:#e6e6e6"></div>

<div class="a h" style="left:248px;top:448px;line-height:15px">Total:</div><div class="a h" style="left:258px;top:463px;line-height:15px">3</div>
<div class="a h" style="left:312px;top:455px">Research Fields</div>
<div class="a h" style="left:439px;top:448px;line-height:15px">Web of Science</div><div class="a h" style="left:448px;top:463px;line-height:15px">Documents</div>
<div class="a h" style="left:572px;top:454.5px;color:#4a7cb6;font-weight:normal;font-size:13.6px">Cites</div>
<svg class="a" style="left:607px;top:460px" width="8" height="5"><path d="M0.5 0.5H7L3.75 4.5Z" fill="#5b8cc6"/></svg>
<div class="a h" style="left:665px;top:455px">Cites/Paper</div>
<div class="a h" style="left:791px;top:455px">Top Papers</div>

<div class="a num" style="left:250px;top:483px;width:40px">1</div>
<div class="a h lk" style="left:312px;top:483px">ENGINEERING</div>
<div class="a num" style="left:460px;top:483px;width:81px">1,034</div>
<div class="a num" style="left:560px;top:483px;width:85px">10,917</div>
<div class="a num" style="left:670px;top:483px;width:85px">10.56</div>
<div class="bar" style="top:483px"><i style="width:92px"></i><span>16</span></div>

<div class="a num" style="left:250px;top:511px;width:40px">2</div>
<div class="a h lk" style="left:312px;top:506px;line-height:13px">AGRICULTURAL<br>SCIENCES</div>
<div class="a num" style="left:460px;top:511px;width:81px">289</div>
<div class="a num" style="left:560px;top:511px;width:85px">3,643</div>
<div class="a num" style="left:670px;top:511px;width:85px">12.61</div>
<div class="bar" style="top:511px"><i style="width:58px"></i><span style="color:#555">10</span></div>

<div class="a num" style="left:250px;top:540px;width:40px">0</div>
<div class="a h lk" style="left:312px;top:540px">ALL FIELDS</div>
<div class="a num" style="left:460px;top:540px;width:81px">4,132</div>
<div class="a num" style="left:560px;top:540px;width:85px">41,658</div>
<div class="a num" style="left:670px;top:540px;width:85px">10.08</div>
<div class="bar" style="top:539px"><i style="width:92px"></i><span>61</span></div>

<!-- footer -->
<div class="a" style="right:7px;top:833px;font-size:11px;font-style:italic;color:#1a1a1a;line-height:14px;text-align:right;letter-spacing:0.1px">InCites Essential Science Indicators dataset updated May 08, 2025.<br>For more information <span style="color:#1f6a9a">Click Here</span></div>
</body></html>
